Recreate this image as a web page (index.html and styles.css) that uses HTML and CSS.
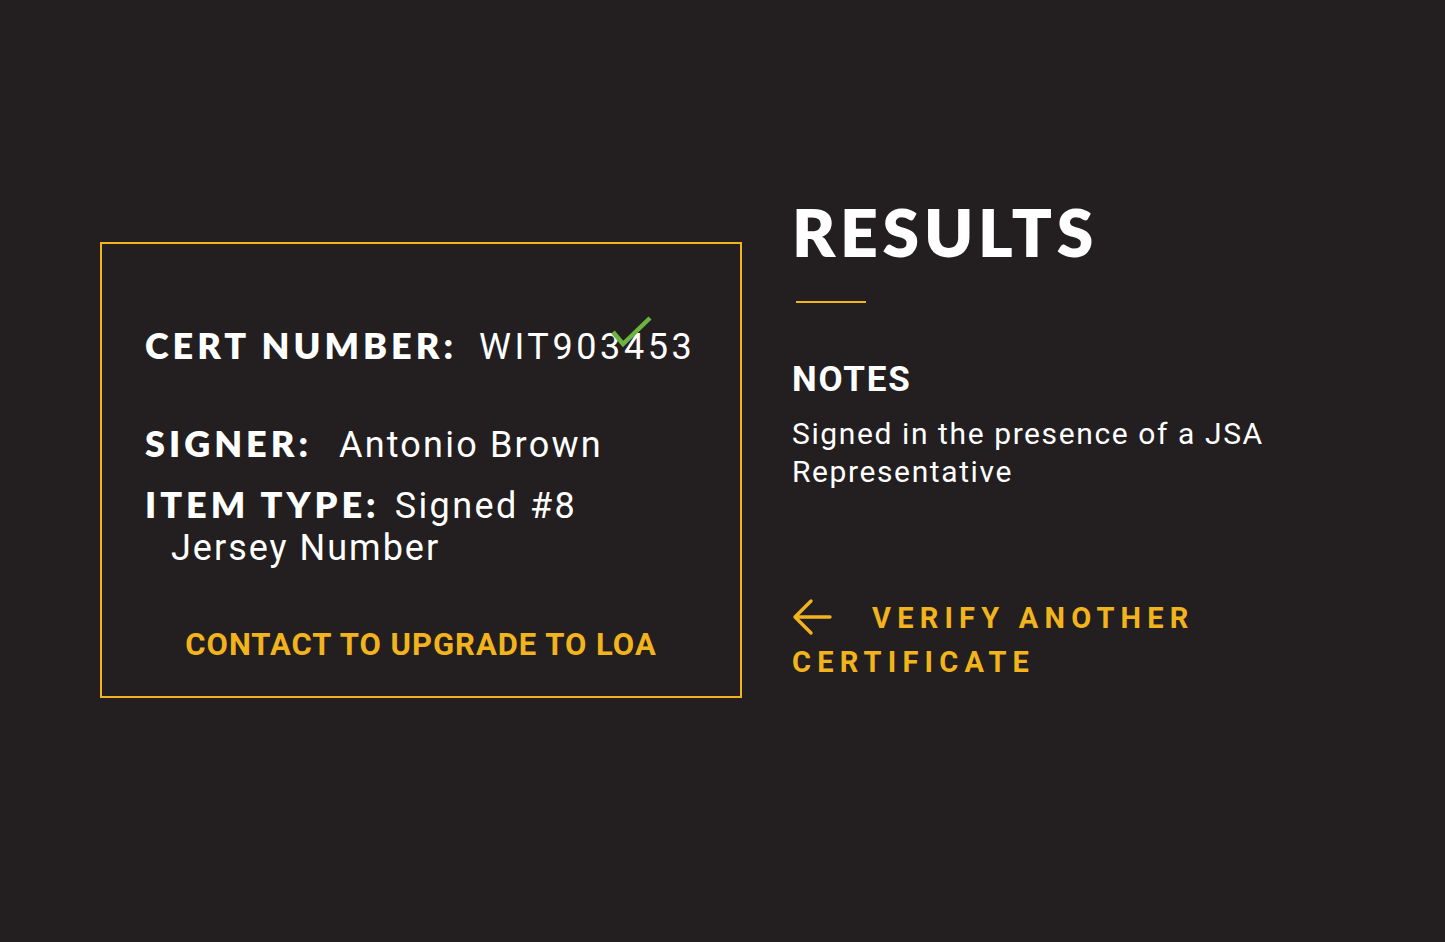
FILE: index.html
```html
<!DOCTYPE html>
<html lang="en">
<head>
<meta charset="utf-8">
<title>Results</title>
<link rel="stylesheet" href="styles.css">
</head>
<body>
<main class="page">
  <section class="card">
    <div class="row cert">
      <span class="label">CERT NUMBER:</span><span class="value cert-value">WIT903453<svg class="check" width="42" height="34" viewBox="0 0 42 34" aria-hidden="true"><polyline points="3,17 13,29 40,3" fill="none" stroke="#6db33f" stroke-width="4.5" stroke-linecap="butt" stroke-linejoin="miter"/></svg></span>
    </div>
    <div class="row signer">
      <span class="label">SIGNER:</span><span class="value signer-value">Antonio Brown</span>
    </div>
    <div class="row item">
      <span class="label">ITEM TYPE:</span><span class="value item-value">Signed #8<br><span class="indent">Jersey Number</span></span>
    </div>
    <a class="upgrade" href="#">CONTACT TO UPGRADE TO LOA</a>
  </section>
  <section class="results">
    <h1 class="title">RESULTS</h1>
    <div class="rule"></div>
    <h2 class="notes-title">NOTES</h2>
    <p class="notes">Signed in the presence of a JSA Representative</p>
    <a class="verify" href="#"><svg class="arrow" width="40" height="38" viewBox="0 0 40 38" aria-hidden="true"><path d="M3 19 H38 M19 3 L3 19 L19 35" fill="none" stroke="#f2b41d" stroke-width="3.4" stroke-linecap="round" stroke-linejoin="round"/></svg><span class="verify-text">VERIFY ANOTHER CERTIFICATE</span></a>
  </section>
</main>
</body>
</html>
```
FILE: styles.css
```css
html, body {
  margin: 0;
  padding: 0;
}
body {
  background: #231f20;
  color: #ffffff;
  font-family: Roboto, "Liberation Sans", sans-serif;
  width: 1445px;
  height: 942px;
  overflow: hidden;
}
.page {
  display: flex;
  align-items: flex-start;
  gap: 50px;
  padding: 199px 0 0 100px;
}
.card {
  box-sizing: border-box;
  width: 642px;
  height: 456px;
  margin-top: 43px;
  border: 2px solid #f2b41d;
  padding: 81px 0 0 43px;
  display: flex;
  flex-direction: column;
}
.row {
  font-family: Lato, "Open Sans", sans-serif;
  font-size: 36px;
  line-height: 40px;
  white-space: nowrap;
}
.label {
  font-family: Lato, "Open Sans", sans-serif;
  font-weight: 800;
  letter-spacing: 4px;
}
.value {
  font-family: Roboto, "Liberation Sans", sans-serif;
  font-weight: 400;
  font-size: 36px;
  letter-spacing: 2px;
  margin-left: 22px;
}
.cert-value {
  position: relative;
  letter-spacing: 3.6px;
}
.signer-value {
  margin-left: 27px;
  letter-spacing: 2.2px;
}
.item-value {
  margin-left: 15px;
  letter-spacing: 2.4px;
}
.check {
  position: absolute;
  left: 131px;
  top: -11px;
}
.signer {
  margin-top: 56px;
}
.item {
  margin-top: 19px;
}
.indent {
  display: inline-block;
  margin-left: 26px;
  letter-spacing: 2px;
}
.upgrade {
  margin: 59px 0 0 -43px;
  align-self: stretch;
  text-align: center;
  font-family: Roboto, "Liberation Sans", sans-serif;
  font-weight: 700;
  font-size: 31px;
  line-height: 36px;
  letter-spacing: 1px;
  color: #f2b41d;
  text-decoration: none;
}
.results {
  width: 490px;
}
.title {
  margin: 0;
  font-family: Lato, "Open Sans", sans-serif;
  font-weight: 800;
  font-size: 66px;
  line-height: 66px;
  letter-spacing: 4.7px;
  color: #ffffff;
}
.rule {
  width: 70px;
  height: 2px;
  margin: 36px 0 0 4px;
  background: #f2b41d;
}
.notes-title {
  margin: 57px 0 0;
  font-family: Roboto, "Liberation Sans", sans-serif;
  font-weight: 700;
  font-size: 35px;
  line-height: 40px;
  letter-spacing: 1.8px;
}
.notes {
  margin: 15px 0 0;
  font-family: Roboto, "Liberation Sans", sans-serif;
  font-size: 30px;
  line-height: 38px;
  letter-spacing: 1.6px;
}
.verify {
  display: block;
  margin-top: 105px;
  font-family: Roboto, "Liberation Sans", sans-serif;
  font-weight: 700;
  font-size: 29px;
  line-height: 44px;
  letter-spacing: 6.2px;
  color: #f2b41d;
  text-decoration: none;
}
.arrow {
  vertical-align: -8px;
  margin-right: 40px;
}
```
